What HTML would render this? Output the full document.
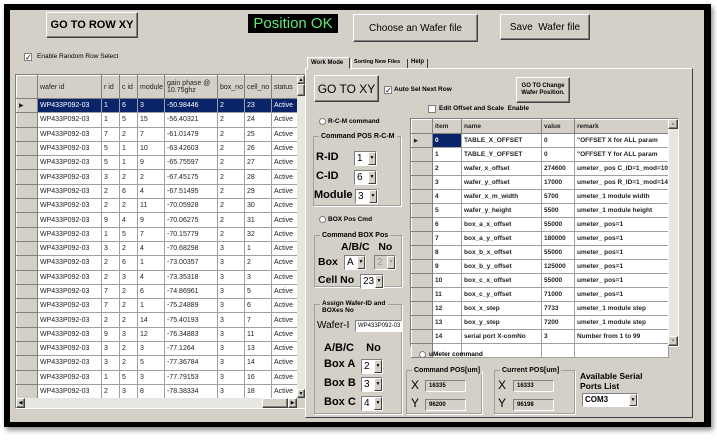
<!DOCTYPE html>
<html><head><meta charset="utf-8"><style>
*{box-sizing:border-box;margin:0;padding:0}
body{width:717px;height:444px;background:#fff;position:relative;overflow:hidden;font-family:"Liberation Sans",sans-serif;font-size:8px;color:#000}
.a{position:absolute;white-space:nowrap}
#frame{left:4px;top:4px;width:707px;height:423px;background:#000;box-shadow:2px 3px 5px #888}
#win{left:10px;top:10px;width:694px;height:412px;background:#d4d0c8}
.btn{position:absolute;white-space:nowrap;background:#d4d0c8;border:1px solid;border-color:#fff #404040 #404040 #fff;box-shadow:inset -1px -1px #808080;display:flex;align-items:center;justify-content:center;text-align:center}
.chk{position:absolute;width:8px;height:8px;background:#fff;border:1px solid #808080;font-size:8px;line-height:7px;text-align:center}
.rad{position:absolute;width:7px;height:7px;border-radius:50%;background:#fff;border:1px solid #808080}
.grp{position:absolute;border:1px solid #a0a0a0;box-shadow:1px 1px #fff}
.gl{position:absolute;top:-5px;left:5px;background:#d4d0c8;padding:0 2px;font-weight:bold;font-size:7px;white-space:nowrap;line-height:9px}
.cb{position:absolute;background:#fff;border:1px solid;border-color:#808080 #fff #fff #808080;font-size:10px;line-height:13px;padding-left:2px;white-space:nowrap;overflow:hidden}
.cb i{position:absolute;right:0;top:0;bottom:0;width:8px;background:#d4d0c8;border:1px solid;border-color:#fff #404040 #404040 #fff;font-style:normal;font-size:5px;line-height:11px;text-align:center}
.tb{position:absolute;background:#d4d0c8;border:1px solid;border-color:#808080 #fff #fff #808080;font-size:6px;font-weight:bold;padding-left:3px;line-height:11px}
table{border-collapse:collapse;table-layout:fixed;position:absolute}
td{border:1px solid #a0a0a0;background:#fff;white-space:nowrap;overflow:hidden;padding-left:2px}
td.h{background:#d4d0c8;border-color:#fff #808080 #808080 #fff}
.L td{height:14.3px;font-size:7px;color:#222}
.R td{height:14px;font-size:6.5px;font-weight:bold;color:#222}
.b{font-weight:bold}
</style></head><body>
<div id="frame" class="a"></div>
<div id="win" class="a"></div>

<div class="btn" style="left:46px;top:12px;width:92px;height:26px;font-size:11px;font-weight:bold">GO TO ROW XY</div>
<div class="a" style="left:248px;top:14px;width:90px;height:19px;background:#000;color:#5fe87a;font-size:15px;text-align:center;line-height:19px">Position OK</div>
<div class="btn" style="left:353px;top:14px;width:125px;height:28px;font-size:10px">Choose an Wafer file</div>
<div class="btn" style="left:500px;top:14px;width:90px;height:26px;font-size:10px">Save&nbsp; Wafer file</div>

<div class="chk" style="left:24px;top:53px">✓</div>
<div class="a" style="left:37px;top:53px;font-size:6.5px">Enable Random Row Select</div>

<div class="a" style="left:15px;top:74px;width:291px;height:335px;border:1px solid;border-color:#808080 #fff #fff #808080;background:#808080"></div>
<table class="L" style="left:16px;top:75px;width:281px">
<colgroup><col style="width:21px"><col style="width:64px"><col style="width:18px"><col style="width:18px"><col style="width:27px"><col style="width:53px"><col style="width:27px"><col style="width:27px"><col style="width:26px"></colgroup>
<tr style="height:23px"><td class="h"></td><td class="h">wafer id</td><td class="h">r id</td><td class="h">c id</td><td class="h">module</td><td class="h" style="line-height:7px;white-space:normal">gain phase @ 10.75ghz</td><td class="h">box_no</td><td class="h">cell_no</td><td class="h">status</td></tr>
<tr><td class="h" style="font-size:6px">▶</td><td style="background:#0a246a;color:#fff">WP433P092-03</td><td style="background:#0a246a;color:#fff">1</td><td style="background:#0a246a;color:#fff">6</td><td style="background:#0a246a;color:#fff">3</td><td style="background:#0a246a;color:#fff">-50.98446</td><td style="background:#0a246a;color:#fff">2</td><td style="background:#0a246a;color:#fff">23</td><td style="background:#0a246a;color:#fff">Active</td></tr>
<tr><td class="h"></td><td>WP433P092-03</td><td>1</td><td>5</td><td>15</td><td>-56.40321</td><td>2</td><td>24</td><td>Active</td></tr>
<tr><td class="h"></td><td>WP433P092-03</td><td>7</td><td>2</td><td>7</td><td>-61.01479</td><td>2</td><td>25</td><td>Active</td></tr>
<tr><td class="h"></td><td>WP433P092-03</td><td>5</td><td>1</td><td>10</td><td>-63.42603</td><td>2</td><td>26</td><td>Active</td></tr>
<tr><td class="h"></td><td>WP433P092-03</td><td>5</td><td>1</td><td>9</td><td>-65.75597</td><td>2</td><td>27</td><td>Active</td></tr>
<tr><td class="h"></td><td>WP433P092-03</td><td>3</td><td>2</td><td>2</td><td>-67.45175</td><td>2</td><td>28</td><td>Active</td></tr>
<tr><td class="h"></td><td>WP433P092-03</td><td>2</td><td>6</td><td>4</td><td>-67.51495</td><td>2</td><td>29</td><td>Active</td></tr>
<tr><td class="h"></td><td>WP433P092-03</td><td>2</td><td>2</td><td>11</td><td>-70.05928</td><td>2</td><td>30</td><td>Active</td></tr>
<tr><td class="h"></td><td>WP433P092-03</td><td>9</td><td>4</td><td>9</td><td>-70.06275</td><td>2</td><td>31</td><td>Active</td></tr>
<tr><td class="h"></td><td>WP433P092-03</td><td>1</td><td>5</td><td>7</td><td>-70.15779</td><td>2</td><td>32</td><td>Active</td></tr>
<tr><td class="h"></td><td>WP433P092-03</td><td>3</td><td>2</td><td>4</td><td>-70.68298</td><td>3</td><td>1</td><td>Active</td></tr>
<tr><td class="h"></td><td>WP433P092-03</td><td>2</td><td>6</td><td>1</td><td>-73.00357</td><td>3</td><td>2</td><td>Active</td></tr>
<tr><td class="h"></td><td>WP433P092-03</td><td>2</td><td>3</td><td>4</td><td>-73.35318</td><td>3</td><td>3</td><td>Active</td></tr>
<tr><td class="h"></td><td>WP433P092-03</td><td>7</td><td>2</td><td>6</td><td>-74.86961</td><td>3</td><td>5</td><td>Active</td></tr>
<tr><td class="h"></td><td>WP433P092-03</td><td>7</td><td>2</td><td>1</td><td>-75.24889</td><td>3</td><td>6</td><td>Active</td></tr>
<tr><td class="h"></td><td>WP433P092-03</td><td>2</td><td>2</td><td>14</td><td>-75.40193</td><td>3</td><td>7</td><td>Active</td></tr>
<tr><td class="h"></td><td>WP433P092-03</td><td>9</td><td>3</td><td>12</td><td>-76.34883</td><td>3</td><td>11</td><td>Active</td></tr>
<tr><td class="h"></td><td>WP433P092-03</td><td>3</td><td>2</td><td>3</td><td>-77.1264</td><td>3</td><td>13</td><td>Active</td></tr>
<tr><td class="h"></td><td>WP433P092-03</td><td>3</td><td>2</td><td>5</td><td>-77.36784</td><td>3</td><td>14</td><td>Active</td></tr>
<tr><td class="h"></td><td>WP433P092-03</td><td>1</td><td>5</td><td>3</td><td>-77.79153</td><td>3</td><td>16</td><td>Active</td></tr>
<tr><td class="h"></td><td>WP433P092-03</td><td>2</td><td>3</td><td>8</td><td>-78.38334</td><td>3</td><td>18</td><td>Active</td></tr>
</table>
<div class="a" style="left:297px;top:75px;width:8px;height:323px;background:#e8e6e0"></div>
<div class="btn" style="left:297px;top:75px;width:8px;height:9px;font-size:5px">▲</div>
<div class="btn" style="left:297px;top:84px;width:8px;height:12px"></div>
<div class="btn" style="left:297px;top:389px;width:8px;height:9px;font-size:5px">▼</div>
<div class="a" style="left:16px;top:398px;width:281px;height:10px;background:#e8e6e0"></div>
<div class="btn" style="left:16px;top:398px;width:9px;height:10px;font-size:5px">◀</div>
<div class="btn" style="left:262px;top:398px;width:26px;height:10px"></div>
<div class="btn" style="left:288px;top:398px;width:9px;height:10px;font-size:5px">▶</div>
<div class="a" style="left:297px;top:398px;width:8px;height:10px;background:#d4d0c8"></div>

<!-- right tab panel -->
<div class="a" style="left:305px;top:68px;width:388px;height:350px;border:1px solid;border-color:#fff #404040 #404040 #fff"></div>
<div class="a" style="left:307px;top:57px;width:43px;height:12px;border:1px solid;border-color:#fff #404040 transparent #fff;background:#d4d0c8;font-size:6px;font-weight:bold;padding:2px 0 0 3px">Work Mode</div>
<div class="a" style="left:351px;top:59px;width:57px;height:9px;border-right:1px solid #404040;border-left:1px solid #fff;font-size:5.5px;font-weight:bold;padding-left:2px">Sorting New Files</div>
<div class="a" style="left:408px;top:59px;width:20px;height:9px;border-right:1px solid #404040;font-size:6px;font-weight:bold;padding-left:3px">Help</div>

<div class="btn" style="left:314px;top:75px;width:65px;height:27px;font-size:12px">GO TO XY</div>
<div class="chk" style="left:384px;top:86px">✓</div>
<div class="a b" style="left:394px;top:86px;font-size:6.5px">Auto Sel Next Row</div>
<div class="btn" style="left:516px;top:77px;width:54px;height:26px;font-size:6px;font-weight:bold;line-height:7px">GO TO Change<br>Wafer Position.</div>
<div class="chk" style="left:428px;top:105px"></div>
<div class="a b" style="left:439px;top:105px;font-size:6.5px">Edit Offset and Scale&nbsp; Enable</div>

<div class="rad" style="left:319px;top:118px"></div>
<div class="a b" style="left:328px;top:118px;font-size:6.5px">R-C-M command</div>
<div class="grp" style="left:313px;top:136px;width:88px;height:70px"><div class="gl">Command POS R-C-M</div></div>
<div class="a b" style="left:316px;top:151px;font-size:11px">R-ID</div>
<div class="cb" style="left:354px;top:151px;width:23px;height:15px">1<i>▼</i></div>
<div class="a b" style="left:316px;top:170px;font-size:11px">C-ID</div>
<div class="cb" style="left:354px;top:170px;width:23px;height:15px">6<i>▼</i></div>
<div class="a b" style="left:314px;top:189px;font-size:11px">Module</div>
<div class="cb" style="left:355px;top:189px;width:23px;height:15px">3<i>▼</i></div>

<div class="rad" style="left:319px;top:216px"></div>
<div class="a b" style="left:328px;top:216px;font-size:6.5px">BOX Pos Cmd</div>
<div class="grp" style="left:314px;top:235px;width:88px;height:52px"><div class="gl">Command BOX Pos</div></div>
<div class="a b" style="left:341px;top:241px;font-size:10.5px">A/B/C&nbsp;&nbsp; No</div>
<div class="a b" style="left:318px;top:256px;font-size:10.5px">Box</div>
<div class="cb" style="left:344px;top:255px;width:22px;height:15px">A<i>▼</i></div>
<div class="cb" style="left:374px;top:255px;width:22px;height:15px;background:#d4d0c8;color:#999">2<i>▼</i></div>
<div class="a b" style="left:318px;top:274px;font-size:10.5px">Cell No</div>
<div class="cb" style="left:360px;top:274px;width:24px;height:15px">23<i>▼</i></div>

<div class="grp" style="left:314px;top:304px;width:88px;height:110px"><div class="gl" style="line-height:7px;white-space:normal;width:68px;font-size:6.5px">Assign Wafer-ID and BOXes No</div></div>
<div class="a" style="left:317px;top:320px;font-size:10px">Wafer-I</div>
<div class="cb" style="left:355px;top:320px;width:47px;height:12px;font-size:6px;line-height:10px">WP433P092-03</div>
<div class="a b" style="left:324px;top:342px;font-size:11px">A/B/C&nbsp;&nbsp;&nbsp; No</div>
<div class="a b" style="left:324px;top:358px;font-size:11px">Box A</div>
<div class="cb" style="left:361px;top:359px;width:22px;height:15px">2<i>▼</i></div>
<div class="a b" style="left:324px;top:377px;font-size:11px">Box B</div>
<div class="cb" style="left:361px;top:377px;width:22px;height:15px">3<i>▼</i></div>
<div class="a b" style="left:324px;top:396px;font-size:11px">Box C</div>
<div class="cb" style="left:361px;top:396px;width:22px;height:15px">4<i>▼</i></div>

<div class="a" style="left:410px;top:118px;width:269px;height:229px;border:1px solid;border-color:#808080 #fff #fff #808080;background:#fff"></div>
<table class="R" style="left:411px;top:119px;width:257px">
<colgroup><col style="width:21px"><col style="width:29px"><col style="width:80px"><col style="width:33px"><col style="width:94px"></colgroup>
<tr><td class="h" style="height:13px"></td><td class="h">item</td><td class="h">name</td><td class="h">value</td><td class="h">remark</td></tr>
<tr><td class="h" style="font-size:5px">▶</td><td style="background:#0a246a;color:#fff">0</td><td>TABLE_X_OFFSET</td><td>0</td><td>"OFFSET X for ALL param</td></tr>
<tr><td class="h"></td><td>1</td><td>TABLE_Y_OFFSET</td><td>0</td><td>"OFFSET Y for ALL param</td></tr>
<tr><td class="h"></td><td>2</td><td>wafer_x_offset</td><td>274600</td><td>umeter_ pos C_ID=1_mod=10</td></tr>
<tr><td class="h"></td><td>3</td><td>wafer_y_offset</td><td>17000</td><td>umeter_ pos R_ID=1_mod=14</td></tr>
<tr><td class="h"></td><td>4</td><td>wafer_x_m_width</td><td>5700</td><td>umeter_1 module width</td></tr>
<tr><td class="h"></td><td>5</td><td>wafer_y_height</td><td>5500</td><td>umeter_1 module height</td></tr>
<tr><td class="h"></td><td>6</td><td>box_a_x_offset</td><td>55000</td><td>umeter_ pos=1</td></tr>
<tr><td class="h"></td><td>7</td><td>box_a_y_offset</td><td>180000</td><td>umeter_ pos=1</td></tr>
<tr><td class="h"></td><td>8</td><td>box_b_x_offset</td><td>55000</td><td>umeter_ pos=1</td></tr>
<tr><td class="h"></td><td>9</td><td>box_b_y_offset</td><td>125000</td><td>umeter_ pos=1</td></tr>
<tr><td class="h"></td><td>10</td><td>box_c_x_offset</td><td>55000</td><td>umeter_ pos=1</td></tr>
<tr><td class="h"></td><td>11</td><td>box_c_y_offset</td><td>71000</td><td>umeter_ pos=1</td></tr>
<tr><td class="h"></td><td>12</td><td>box_x_step</td><td>7733</td><td>umeter_1 module step</td></tr>
<tr><td class="h"></td><td>13</td><td>box_y_step</td><td>7200</td><td>umeter_1 module step</td></tr>
<tr><td class="h"></td><td>14</td><td>serial port X-comNo</td><td>3</td><td>Number from 1 to 99</td></tr>
<tr><td class="h" style="height:4px"></td><td style="height:4px"></td><td></td><td></td><td></td></tr>
</table>
<div class="a" style="left:668px;top:119px;width:10px;height:227px;background:#e8e6e0;border-left:1px solid #fff"></div>
<div class="btn" style="left:668px;top:119px;width:10px;height:10px;font-size:5px;color:#888">▲</div>
<div class="btn" style="left:668px;top:336px;width:10px;height:10px;font-size:5px;color:#888">▼</div>

<div class="rad" style="left:419px;top:351px"></div>
<div class="a b" style="left:429px;top:351px;font-size:6.5px">uMeter command</div>
<div class="grp" style="left:406px;top:370px;width:76px;height:44px"><div class="gl">Command POS[um]</div></div>
<div class="a" style="left:411px;top:378px;font-size:12px">X</div>
<div class="tb" style="left:425px;top:380px;width:41px;height:12px">16335</div>
<div class="a" style="left:411px;top:396px;font-size:12px">Y</div>
<div class="tb" style="left:425px;top:399px;width:41px;height:12px">96200</div>
<div class="grp" style="left:494px;top:370px;width:81px;height:44px"><div class="gl">Current POS[um]</div></div>
<div class="a" style="left:498px;top:378px;font-size:12px">X</div>
<div class="tb" style="left:513px;top:380px;width:41px;height:12px">16333</div>
<div class="a" style="left:498px;top:396px;font-size:12px">Y</div>
<div class="tb" style="left:513px;top:399px;width:41px;height:12px">96198</div>
<div class="a b" style="left:580px;top:371px;font-size:8.5px;line-height:10px">Available Serial<br>Ports List</div>
<div class="cb" style="left:582px;top:393px;width:56px;height:14px;font-size:8px;font-weight:bold;line-height:12px">COM3<i>▼</i></div>
</body></html>
